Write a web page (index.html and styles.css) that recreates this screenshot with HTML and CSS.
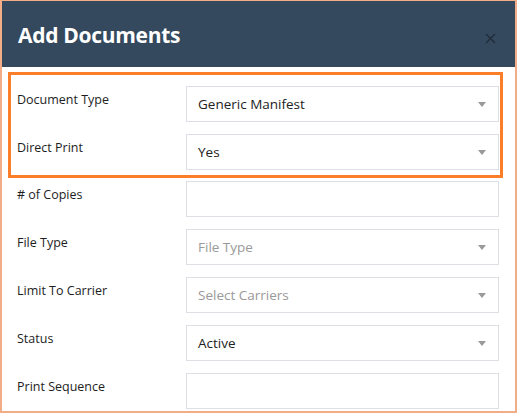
FILE: index.html
```html
<!DOCTYPE html>
<html>
<head>
<meta charset="utf-8">
<link rel="stylesheet" href="styles.css">
</head>
<body>
<div class="modal">
  <div class="modal-header">
    <h1 class="modal-title">Add Documents</h1>
    <button class="close" aria-label="Close">
      <svg width="11" height="11" viewBox="0 0 11 11"><path d="M1 1 L10 10 M10 1 L1 10" stroke="#1f2c39" stroke-width="1.4" fill="none"/></svg>
    </button>
  </div>
  <div class="modal-body">
    <div class="highlight">
      <div class="row">
        <label class="label">Document Type</label>
        <div class="control select"><span class="value">Generic Manifest</span><span class="caret"></span></div>
      </div>
      <div class="row">
        <label class="label">Direct Print</label>
        <div class="control select"><span class="value">Yes</span><span class="caret"></span></div>
      </div>
    </div>
    <div class="row plain">
      <label class="label"># of Copies</label>
      <div class="control"></div>
    </div>
    <div class="row plain">
      <label class="label">File Type</label>
      <div class="control select"><span class="value placeholder">File Type</span><span class="caret"></span></div>
    </div>
    <div class="row plain">
      <label class="label">Limit To Carrier</label>
      <div class="control select"><span class="value placeholder">Select Carriers</span><span class="caret"></span></div>
    </div>
    <div class="row plain">
      <label class="label">Status</label>
      <div class="control select"><span class="value">Active</span><span class="caret"></span></div>
    </div>
    <div class="row plain">
      <label class="label">Print Sequence</label>
      <div class="control"></div>
    </div>
  </div>
</div>
</body>
</html>
```

FILE: styles.css
```css
* { box-sizing: border-box; }
html, body { margin: 0; padding: 0; background: #fff; }
body { font-family: "Open Sans", "Noto Sans", sans-serif; color: #222; }

.modal {
  width: 517px;
  height: 413px;
  border: 2px solid #f3ad86;
  border-top-width: 1px;
  overflow: hidden;
  background: #fff;
}

.modal-header {
  height: 66px;
  background: #34495e;
  display: flex;
  justify-content: space-between;
  align-items: flex-start;
  padding: 0 19px 0 16px;
}

.modal-title {
  margin: 0;
  padding-top: 19px;
  font-size: 21px;
  line-height: 30px;
  font-weight: 700;
  color: #fff;
  letter-spacing: -0.3px;
}

.close {
  margin-top: 32px;
  padding: 0;
  border: 0;
  background: none;
  width: 11px;
  height: 11px;
  display: block;
}
.close svg { display: block; }

.modal-body {
  padding: 5px 16px 0 6px;
}

.highlight {
  border: 3px solid #fd7e28;
  margin-right: -4px;
  padding: 11px 1px 5px 6px;
  display: flex;
  flex-direction: column;
  gap: 12px;
  margin-bottom: 3px;
}

.row {
  display: grid;
  grid-template-columns: 169px 1fr;
  height: 36px;
}
.row.plain {
  padding-left: 9px;
  margin-bottom: 12px;
}

.label {
  font-size: 12.5px;
  line-height: 18px;
  padding-top: 5px;
  color: #1e1e1e;
}

.control {
  border: 1px solid #dcdfe3;
  background: #fff;
  height: 36px;
  display: flex;
  align-items: center;
  justify-content: space-between;
  padding: 0 12px 0 11px;
}

.value {
  font-size: 13.5px;
  color: #222;
  line-height: 19px;
}
.value.placeholder { color: #999; }

.caret {
  width: 0;
  height: 0;
  border-left: 4.5px solid transparent;
  border-right: 4.5px solid transparent;
  border-top: 5px solid #999;
  margin-top: 1px;
}
```
